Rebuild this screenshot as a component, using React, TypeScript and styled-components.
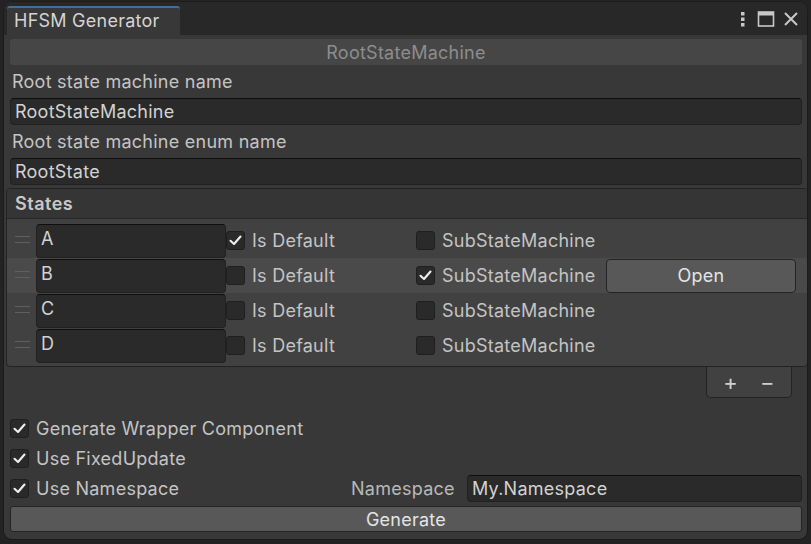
import React, { useState } from 'react';
import styled, { createGlobalStyle } from 'styled-components';

const GlobalStyle = createGlobalStyle`
  html, body {
    margin: 0;
    padding: 0;
    background: #232323;
    font-family: Inter, "Noto Sans", sans-serif;
  }
`;

const Window = styled.div`
  margin: 1px 3px 0 3px;
  height: 539px;
  box-sizing: border-box;
  border: 1px solid #1b1b1b;
  border-radius: 9px;
  background: #383838;
  overflow: hidden;
  display: flex;
  flex-direction: column;
  color: #c4c4c4;
  font-size: 18px;
  letter-spacing: 0.25px;
`;

const TitleBar = styled.div`
  height: 33px;
  flex: none;
  background: #282828;
  display: flex;
  align-items: flex-end;
  padding-left: 3px;
  padding-right: 8px;
`;

const Tab = styled.div`
  height: 29px;
  width: 173px;
  box-sizing: border-box;
  background: #383838;
  border-top: 2px solid #3b6fa3;
  border-radius: 3px 3px 0 0;
  color: #d4d4d4;
  padding-left: 7px;
  padding-bottom: 2px;
  display: flex;
  align-items: center;
`;

const TitleIcons = styled.div`
  margin-left: auto;
  align-self: center;
  display: flex;
  align-items: center;
  gap: 8px;
  color: #c8c8c8;
`;

const Content = styled.div`
  flex: 1;
  display: flex;
  flex-direction: column;
  padding: 4px 5px 0 2px;
`;

const Inset = styled.div`
  padding-left: 4px;
  display: flex;
  flex-direction: column;
`;

const HeaderBar = styled.div`
  height: 26px;
  background: #464646;
  border-radius: 3px;
  color: #8d8d8d;
  display: flex;
  align-items: center;
  justify-content: center;
`;

const Label = styled.div`
  height: 33px;
  display: flex;
  align-items: center;
  padding-left: 2px;
  color: #c4c4c4;
`;

const Field = styled.div<{ $tall?: boolean }>`
  height: ${(p) => (p.$tall ? '34px' : '27px')};
  box-sizing: border-box;
  background: #2a2a2a;
  border: 1px solid #212121;
  border-top-color: #0e0e0e;
  border-radius: 4px;
  color: #d2d2d2;
  padding-left: 4px;
  display: flex;
  align-items: ${(p) => (p.$tall ? 'flex-start' : 'center')};
  padding-top: ${(p) => (p.$tall ? '3px' : '0')};
`;

const StatesBox = styled.div`
  margin-top: 3px;
  border: 1px solid #232323;
  border-radius: 4px;
  overflow: hidden;
  background: #414141;
  margin-right: -6px;
`;

const StatesHeader = styled.div`
  height: 29px;
  background: #353535;
  border-bottom: 1px solid #262626;
  font-weight: 600;
  color: #c8c8c8;
  display: flex;
  align-items: center;
  padding-left: 8px;
  letter-spacing: 0.5px;
`;

const List = styled.div`
  padding: 4px 0 3px;
`;

const Row = styled.div<{ $active?: boolean }>`
  height: 35px;
  display: grid;
  grid-template-columns: 29px 190px 190px 190px 190px;
  align-items: center;
  background: ${(p) => (p.$active ? '#4a4a4a' : 'transparent')};
`;

const Handle = styled.div`
  width: 15px;
  height: 5px;
  margin-left: 8px;
  border-top: 1px solid #5f5f5f;
  border-bottom: 1px solid #5f5f5f;
  margin-top: -3px;
`;

const CheckLabel = styled.label`
  display: flex;
  align-items: center;
  gap: 7px;
  color: #c4c4c4;
  white-space: nowrap;
  height: 30px;
`;

const Box = styled.span`
  width: 19px;
  height: 19px;
  box-sizing: border-box;
  background: #2a2a2a;
  border: 1px solid #1f1f1f;
  border-radius: 3px;
  display: flex;
  align-items: center;
  justify-content: center;
  flex: none;
`;

const Button = styled.button<{ $size?: 'row' | 'wide' }>`
  box-sizing: border-box;
  height: ${(p) => (p.$size === 'row' ? '34px' : '26px')};
  margin-top: ${(p) => (p.$size === 'row' ? '0' : '3px')};
  background: #585858;
  border: 1px solid #242424;
  border-radius: ${(p) => (p.$size === 'row' ? '4px' : '3px')};
  color: #e4e4e4;
  font-family: inherit;
  font-size: 18px;
  letter-spacing: 0.25px;
  padding: 0;
`;

const FooterWrap = styled.div`
  display: flex;
  justify-content: flex-end;
  padding-right: 16px;
  margin-right: -6px;
`;

const Footer = styled.div`
  width: 86px;
  height: 31px;
  box-sizing: border-box;
  background: #414141;
  border: 1px solid #232323;
  border-top: none;
  border-radius: 0 0 5px 5px;
  display: flex;
  align-items: center;
  justify-content: center;
  gap: 22px;
  color: #cfcfcf;
  font-size: 22px;
`;

const Options = styled.div`
  margin-top: 15px;
  display: flex;
  flex-direction: column;
`;

const NamespaceRow = styled.div`
  display: grid;
  grid-template-columns: 341px 116px 1fr;
  align-items: center;
`;

const NsLabel = styled.span`
  color: #b8b8b8;
`;

const Check = () => (
  <svg width="13" height="13" viewBox="0 0 13 13">
    <polyline points="1.5,6.8 5,10 11.5,2.5" fill="none" stroke="#eeeeee" strokeWidth="2.1" strokeLinecap="round" strokeLinejoin="round" />
  </svg>
);

const CheckBox: React.FC<{ checked: boolean; label: string; onToggle: () => void }> = ({ checked, label, onToggle }) => (
  <CheckLabel onClick={onToggle}>
    <Box>{checked && <Check />}</Box>
    {label}
  </CheckLabel>
);

const Kebab = () => (
  <svg width="12" height="18" viewBox="0 0 12 18">
    <rect x="4" y="2" width="3.5" height="3.5" fill="#c8c8c8" />
    <rect x="4" y="7.5" width="3.5" height="3.5" fill="#c8c8c8" />
    <rect x="4" y="13" width="3.5" height="3.5" fill="#c8c8c8" />
  </svg>
);

const Maximize = () => (
  <svg width="18" height="18" viewBox="0 0 18 18">
    <rect x="1.5" y="2" width="15" height="14" fill="none" stroke="#c8c8c8" strokeWidth="1.6" />
    <rect x="1.5" y="2" width="15" height="3.5" fill="#c8c8c8" />
  </svg>
);

const Close = () => (
  <svg width="16" height="16" viewBox="0 0 16 16">
    <path d="M2 2 L14 14 M14 2 L2 14" stroke="#c8c8c8" strokeWidth="2" />
  </svg>
);

type State = { name: string; isDefault: boolean; sub: boolean };

const App: React.FC = () => {
  const [states, setStates] = useState<State[]>([
    { name: 'A', isDefault: true, sub: false },
    { name: 'B', isDefault: false, sub: true },
    { name: 'C', isDefault: false, sub: false },
    { name: 'D', isDefault: false, sub: false },
  ]);
  const [wrapper, setWrapper] = useState(true);
  const [fixed, setFixed] = useState(true);
  const [useNs, setUseNs] = useState(true);

  const toggle = (i: number, key: 'isDefault' | 'sub') =>
    setStates((s) => s.map((st, j) => (j === i ? { ...st, [key]: !st[key] } : st)));

  return (
    <>
      <GlobalStyle />
      <Window>
        <TitleBar>
          <Tab>HFSM Generator</Tab>
          <TitleIcons>
            <Kebab />
            <Maximize />
            <Close />
          </TitleIcons>
        </TitleBar>
        <Content>
          <Inset>
            <HeaderBar>RootStateMachine</HeaderBar>
            <Label>Root state machine name</Label>
            <Field>RootStateMachine</Field>
            <Label>Root state machine enum name</Label>
            <Field>RootState</Field>
          </Inset>
          <StatesBox>
            <StatesHeader>States</StatesHeader>
            <List>
              {states.map((st, i) => (
                <Row key={st.name} $active={i === 1}>
                  <Handle />
                  <Field $tall>{st.name}</Field>
                  <CheckBox checked={st.isDefault} label="Is Default" onToggle={() => toggle(i, 'isDefault')} />
                  <CheckBox checked={st.sub} label="SubStateMachine" onToggle={() => toggle(i, 'sub')} />
                  {st.sub ? <Button $size="row">Open</Button> : <span />}
                </Row>
              ))}
            </List>
          </StatesBox>
          <FooterWrap>
            <Footer>
              <span>+</span>
              <span>−</span>
            </Footer>
          </FooterWrap>
          <Inset>
            <Options>
              <CheckBox checked={wrapper} label="Generate Wrapper Component" onToggle={() => setWrapper(!wrapper)} />
              <CheckBox checked={fixed} label="Use FixedUpdate" onToggle={() => setFixed(!fixed)} />
              <NamespaceRow>
                <CheckBox checked={useNs} label="Use Namespace" onToggle={() => setUseNs(!useNs)} />
                <NsLabel>Namespace</NsLabel>
                <Field>My.Namespace</Field>
              </NamespaceRow>
            </Options>
            <Button $size="wide">Generate</Button>
          </Inset>
        </Content>
      </Window>
    </>
  );
};

export default App;
